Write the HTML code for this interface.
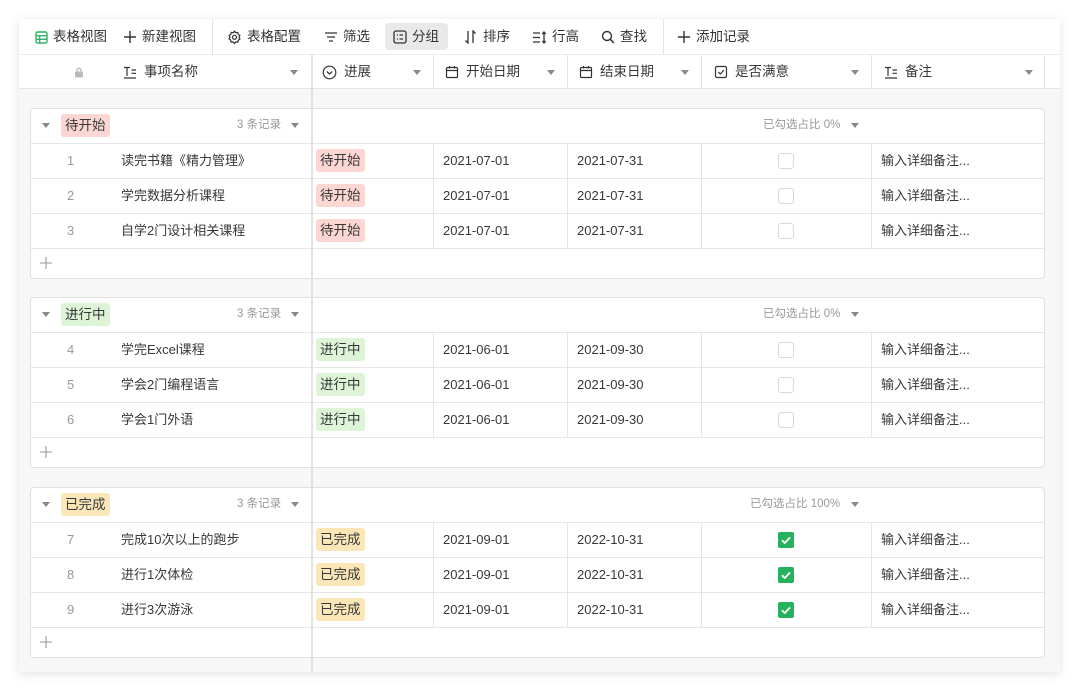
<!DOCTYPE html>
<html><head><meta charset="utf-8"><style>
*{margin:0;padding:0;box-sizing:border-box}
body{width:1080px;height:692px;background:#fff;font-family:"Liberation Sans","Noto Sans CJK SC",sans-serif;font-size:13px;color:#383838;position:relative;overflow:hidden}
.a{position:absolute}
.card{left:19px;top:19px;width:1041px;height:653px;background:#f7f7f7;box-shadow:0 2px 10px rgba(0,0,0,.12)}
.tb{left:19px;top:19px;width:1041px;height:36px;background:#fff;border-bottom:1px solid #ececec}
.tbi{top:19px;height:36px;line-height:36px;font-size:13.5px;color:#333;display:flex;align-items:center;gap:5px;white-space:nowrap}
.hd{left:19px;top:55px;width:1041px;height:34px;background:#fff;border-bottom:1px solid #e4e4e4}
.hc{top:55px;height:34px;line-height:34px;font-size:13.5px;display:flex;align-items:center;gap:7px}
.vl{width:1px;background:#e4e4e4}
.dd{width:0;height:0;border-left:4px solid transparent;border-right:4px solid transparent;border-top:5px solid #888}
.grp{left:30px;width:1015px;height:171px;background:#fff;border:1px solid #e0e0e0;border-radius:4px}
.row{left:31px;width:1013px;height:35px;border-top:1px solid #e6e6e6}
.t{height:35px;line-height:35px;white-space:nowrap}
.tag{height:23px;line-height:23px;padding:0 4px;border-radius:3px;font-size:13.5px}
.r{background:#fbd6d3}.g{background:#ddf5d6}.y{background:#fbe6b8}
.cb{width:16px;height:16px;border:1px solid #d8d8d8;border-radius:3px;background:#fff}
.ck{width:16px;height:16px;border-radius:2px;background:#26b15f}
.gray{color:#999;font-size:11.5px}
.big{left:311px;top:55px;height:617px;width:2px;background:#e2e2e2;z-index:5}
</style></head><body>
<div class="a card"></div>
<div class="a tb"></div>
<div class="a vl" style="left:212px;top:19px;height:36px"></div>
<div class="a vl" style="left:663px;top:19px;height:36px"></div>
<div class="a" style="left:385px;top:23px;width:63px;height:27px;background:#e9e9e9;border-radius:4px"></div>
<div class="a tbi" style="left:35px"><svg width="13" height="13" viewBox="0 0 13 13"><rect x="1" y="1" width="11" height="11" rx="1.5" fill="none" stroke="#2fb365" stroke-width="1.4"/><path d="M1 4.7H12M1 8.3H12M4.7 4.7V12" stroke="#2fb365" stroke-width="1.3"/></svg>表格视图</div>
<div class="a tbi" style="left:123px"><svg width="14" height="14"><path d="M7 1V13M1 7H13" stroke="#333" stroke-width="1.4"/></svg>新建视图</div>
<div class="a tbi" style="left:227px"><svg width="15" height="15" viewBox="0 0 15 15"><path d="M7.5 1.2l1.3 1.5 2-.3.4 2 1.7 1.1-.9 1.8.9 1.8-1.7 1.1-.4 2-2-.3-1.3 1.5-1.3-1.5-2 .3-.4-2L2.1 9.1 3 7.3 2.1 5.5 3.8 4.4l.4-2 2 .3z" fill="none" stroke="#333" stroke-width="1.2"/><circle cx="7.5" cy="7.3" r="2" fill="none" stroke="#333" stroke-width="1.2"/></svg>表格配置</div>
<div class="a tbi" style="left:324px"><svg width="14" height="12"><path d="M1 2H13M3 6H11M5 10H9" stroke="#333" stroke-width="1.3"/></svg>筛选</div>
<div class="a tbi" style="left:393px"><svg width="14" height="14"><rect x="1" y="1" width="12" height="12" rx="2" fill="none" stroke="#333" stroke-width="1.3"/><path d="M4 5H5M4 9H5M6.5 5H10M6.5 9H10" stroke="#333" stroke-width="1.3"/></svg>分组</div>
<div class="a tbi" style="left:464px"><svg width="14" height="14"><path d="M4 1V13L1.5 10.5M9 13V1L11.5 3.5" fill="none" stroke="#333" stroke-width="1.3"/></svg>排序</div>
<div class="a tbi" style="left:532px"><svg width="15" height="13"><path d="M1 2H8M1 6.5H8M1 11H8M12 1V12M10.3 3L12 1 13.7 3M10.3 10L12 12 13.7 10" fill="none" stroke="#333" stroke-width="1.3"/></svg>行高</div>
<div class="a tbi" style="left:601px"><svg width="14" height="14"><circle cx="6" cy="6" r="4.5" fill="none" stroke="#333" stroke-width="1.4"/><path d="M9.3 9.3L13 13" stroke="#333" stroke-width="1.5"/></svg>查找</div>
<div class="a tbi" style="left:677px"><svg width="14" height="14"><path d="M7 1V13M1 7H13" stroke="#333" stroke-width="1.4"/></svg>添加记录</div>

<div class="a hd"></div>
<div class="a big"></div>
<div class="a vl" style="left:433px;top:55px;height:34px"></div>
<div class="a vl" style="left:567px;top:55px;height:34px"></div>
<div class="a vl" style="left:701px;top:55px;height:34px"></div>
<div class="a vl" style="left:871px;top:55px;height:34px"></div>
<div class="a vl" style="left:1044px;top:55px;height:34px"></div>
<div class="a" style="left:74px;top:66px"><svg width="10" height="11"><rect x="1" y="4.5" width="8" height="6" rx="1" fill="#bbb"/><path d="M3 5V3.3a2 2 0 0 1 4 0V5" fill="none" stroke="#bbb" stroke-width="1.3"/></svg></div>
<div class="a hc" style="left:123px"><svg width="14" height="13"><path d="M1 1.5H7M4 1.5V10M1 12H13M8.5 4H13M8.5 7.3H13" stroke="#333" stroke-width="1.2"/></svg>事项名称</div>
<div class="a dd" style="left:290px;top:70px"></div>
<div class="a hc" style="left:322px"><svg width="15" height="15"><circle cx="7.5" cy="7.5" r="6.3" fill="none" stroke="#333" stroke-width="1.2"/><path d="M4.8 6.5L7.5 9 10.2 6.5" fill="none" stroke="#333" stroke-width="1.2"/></svg>进展</div>
<div class="a dd" style="left:413px;top:70px"></div>
<div class="a hc" style="left:445px"><svg width="14" height="14"><rect x="1.5" y="2.5" width="11" height="10" rx="1" fill="none" stroke="#333" stroke-width="1.2"/><path d="M1.5 5.5H12.5M4.5 1V3.5M9.5 1V3.5" stroke="#333" stroke-width="1.2"/></svg>开始日期</div>
<div class="a dd" style="left:547px;top:70px"></div>
<div class="a hc" style="left:579px"><svg width="14" height="14"><rect x="1.5" y="2.5" width="11" height="10" rx="1" fill="none" stroke="#333" stroke-width="1.2"/><path d="M1.5 5.5H12.5M4.5 1V3.5M9.5 1V3.5" stroke="#333" stroke-width="1.2"/></svg>结束日期</div>
<div class="a dd" style="left:681px;top:70px"></div>
<div class="a hc" style="left:714px"><svg width="14" height="14"><rect x="1.5" y="1.5" width="11" height="11" rx="1.5" fill="none" stroke="#333" stroke-width="1.2"/><path d="M4.3 7L6.3 9 9.8 5.2" fill="none" stroke="#333" stroke-width="1.2"/></svg>是否满意</div>
<div class="a dd" style="left:851px;top:70px"></div>
<div class="a hc" style="left:884px"><svg width="14" height="13"><path d="M1 1.5H7M4 1.5V10M1 12H13M8.5 4H13M8.5 7.3H13" stroke="#333" stroke-width="1.2"/></svg>备注</div>
<div class="a dd" style="left:1025px;top:70px"></div>

<!-- GROUP 1 -->
<div class="a grp" style="top:108px"></div>
<div class="a dd" style="left:42px;top:123px"></div>
<div class="a tag r" style="left:61px;top:114px">待开始</div>
<div class="a t gray" style="left:237px;top:108px">3 条记录</div>
<div class="a dd" style="left:291px;top:123px"></div>
<div class="a t gray" style="left:763px;top:108px">已勾选占比 0%</div>
<div class="a dd" style="left:851px;top:123px"></div>
<div class="a row" style="top:143px"></div><div class="a row" style="top:178px"></div><div class="a row" style="top:213px"></div><div class="a row" style="top:248px"></div>
<div class="a vl" style="left:433px;top:143px;height:105px"></div><div class="a vl" style="left:567px;top:143px;height:105px"></div><div class="a vl" style="left:701px;top:143px;height:105px"></div><div class="a vl" style="left:871px;top:143px;height:105px"></div>
<div class="a t" style="left:67px;top:143px;color:#999">1</div><div class="a t" style="left:121px;top:143px">读完书籍《精力管理》</div><div class="a tag r" style="left:316px;top:149px">待开始</div><div class="a t" style="left:443px;top:143px">2021-07-01</div><div class="a t" style="left:577px;top:143px">2021-07-31</div><div class="a cb" style="left:778px;top:153px"></div><div class="a t" style="left:881px;top:143px">输入详细备注...</div>
<div class="a t" style="left:67px;top:178px;color:#999">2</div><div class="a t" style="left:121px;top:178px">学完数据分析课程</div><div class="a tag r" style="left:316px;top:184px">待开始</div><div class="a t" style="left:443px;top:178px">2021-07-01</div><div class="a t" style="left:577px;top:178px">2021-07-31</div><div class="a cb" style="left:778px;top:188px"></div><div class="a t" style="left:881px;top:178px">输入详细备注...</div>
<div class="a t" style="left:67px;top:213px;color:#999">3</div><div class="a t" style="left:121px;top:213px">自学2门设计相关课程</div><div class="a tag r" style="left:316px;top:219px">待开始</div><div class="a t" style="left:443px;top:213px">2021-07-01</div><div class="a t" style="left:577px;top:213px">2021-07-31</div><div class="a cb" style="left:778px;top:223px"></div><div class="a t" style="left:881px;top:213px">输入详细备注...</div>
<div class="a" style="left:40px;top:257px"><svg width="12" height="12"><path d="M6 0V12M0 6H12" stroke="#999" stroke-width="1.1"/></svg></div>

<!-- GROUP 2 -->
<div class="a grp" style="top:297px"></div>
<div class="a dd" style="left:42px;top:312px"></div>
<div class="a tag g" style="left:61px;top:303px">进行中</div>
<div class="a t gray" style="left:237px;top:297px">3 条记录</div>
<div class="a dd" style="left:291px;top:312px"></div>
<div class="a t gray" style="left:763px;top:297px">已勾选占比 0%</div>
<div class="a dd" style="left:851px;top:312px"></div>
<div class="a row" style="top:332px"></div><div class="a row" style="top:367px"></div><div class="a row" style="top:402px"></div><div class="a row" style="top:437px"></div>
<div class="a vl" style="left:433px;top:332px;height:105px"></div><div class="a vl" style="left:567px;top:332px;height:105px"></div><div class="a vl" style="left:701px;top:332px;height:105px"></div><div class="a vl" style="left:871px;top:332px;height:105px"></div>
<div class="a t" style="left:67px;top:332px;color:#999">4</div><div class="a t" style="left:121px;top:332px">学完Excel课程</div><div class="a tag g" style="left:316px;top:338px">进行中</div><div class="a t" style="left:443px;top:332px">2021-06-01</div><div class="a t" style="left:577px;top:332px">2021-09-30</div><div class="a cb" style="left:778px;top:342px"></div><div class="a t" style="left:881px;top:332px">输入详细备注...</div>
<div class="a t" style="left:67px;top:367px;color:#999">5</div><div class="a t" style="left:121px;top:367px">学会2门编程语言</div><div class="a tag g" style="left:316px;top:373px">进行中</div><div class="a t" style="left:443px;top:367px">2021-06-01</div><div class="a t" style="left:577px;top:367px">2021-09-30</div><div class="a cb" style="left:778px;top:377px"></div><div class="a t" style="left:881px;top:367px">输入详细备注...</div>
<div class="a t" style="left:67px;top:402px;color:#999">6</div><div class="a t" style="left:121px;top:402px">学会1门外语</div><div class="a tag g" style="left:316px;top:408px">进行中</div><div class="a t" style="left:443px;top:402px">2021-06-01</div><div class="a t" style="left:577px;top:402px">2021-09-30</div><div class="a cb" style="left:778px;top:412px"></div><div class="a t" style="left:881px;top:402px">输入详细备注...</div>
<div class="a" style="left:40px;top:446px"><svg width="12" height="12"><path d="M6 0V12M0 6H12" stroke="#999" stroke-width="1.1"/></svg></div>

<!-- GROUP 3 -->
<div class="a grp" style="top:487px"></div>
<div class="a dd" style="left:42px;top:502px"></div>
<div class="a tag y" style="left:61px;top:493px">已完成</div>
<div class="a t gray" style="left:237px;top:487px">3 条记录</div>
<div class="a dd" style="left:291px;top:502px"></div>
<div class="a t gray" style="left:750px;top:487px">已勾选占比 100%</div>
<div class="a dd" style="left:851px;top:502px"></div>
<div class="a row" style="top:522px"></div><div class="a row" style="top:557px"></div><div class="a row" style="top:592px"></div><div class="a row" style="top:627px"></div>
<div class="a vl" style="left:433px;top:522px;height:105px"></div><div class="a vl" style="left:567px;top:522px;height:105px"></div><div class="a vl" style="left:701px;top:522px;height:105px"></div><div class="a vl" style="left:871px;top:522px;height:105px"></div>
<div class="a t" style="left:67px;top:522px;color:#999">7</div><div class="a t" style="left:121px;top:522px">完成10次以上的跑步</div><div class="a tag y" style="left:316px;top:528px">已完成</div><div class="a t" style="left:443px;top:522px">2021-09-01</div><div class="a t" style="left:577px;top:522px">2022-10-31</div><div class="a ck" style="left:778px;top:532px"><svg width="16" height="16"><path d="M4 8.3L6.8 11 12 5.5" fill="none" stroke="#fff" stroke-width="1.8"/></svg></div><div class="a t" style="left:881px;top:522px">输入详细备注...</div>
<div class="a t" style="left:67px;top:557px;color:#999">8</div><div class="a t" style="left:121px;top:557px">进行1次体检</div><div class="a tag y" style="left:316px;top:563px">已完成</div><div class="a t" style="left:443px;top:557px">2021-09-01</div><div class="a t" style="left:577px;top:557px">2022-10-31</div><div class="a ck" style="left:778px;top:567px"><svg width="16" height="16"><path d="M4 8.3L6.8 11 12 5.5" fill="none" stroke="#fff" stroke-width="1.8"/></svg></div><div class="a t" style="left:881px;top:557px">输入详细备注...</div>
<div class="a t" style="left:67px;top:592px;color:#999">9</div><div class="a t" style="left:121px;top:592px">进行3次游泳</div><div class="a tag y" style="left:316px;top:598px">已完成</div><div class="a t" style="left:443px;top:592px">2021-09-01</div><div class="a t" style="left:577px;top:592px">2022-10-31</div><div class="a ck" style="left:778px;top:602px"><svg width="16" height="16"><path d="M4 8.3L6.8 11 12 5.5" fill="none" stroke="#fff" stroke-width="1.8"/></svg></div><div class="a t" style="left:881px;top:592px">输入详细备注...</div>
<div class="a" style="left:40px;top:636px"><svg width="12" height="12"><path d="M6 0V12M0 6H12" stroke="#999" stroke-width="1.1"/></svg></div>
</body></html>
